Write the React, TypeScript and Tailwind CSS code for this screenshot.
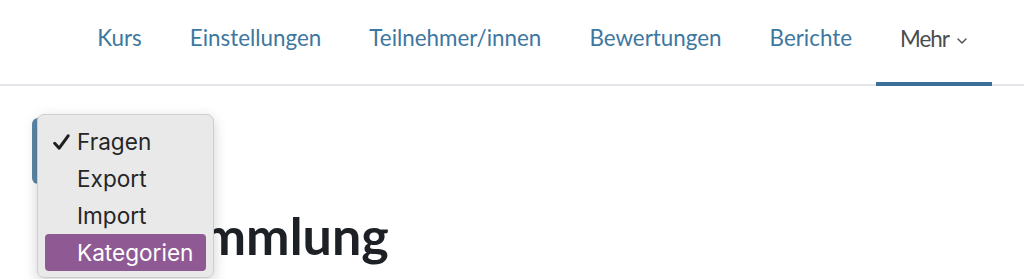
const navLinks = ["Kurs", "Einstellungen", "Teilnehmer/innen", "Bewertungen", "Berichte"];
const menuItems = ["Fragen", "Export", "Import", "Kategorien"];

export default function App() {
  return (
    <div className="relative w-[1024px] h-[279px] overflow-hidden bg-white" style={{ fontFamily: "Lato, 'Noto Sans', sans-serif" }}>
      {/* Secondary navigation */}
      <nav className="flex justify-end pr-[32px] border-b-2 border-[#e3e5e8] h-[86px]">
        {navLinks.map((label) => (
          <a key={label} href="#" className="flex items-center px-[24px] pb-[8px] text-[22.4px] text-[#3e77a0]">
            {label}
          </a>
        ))}
        <a href="#" className="flex items-center gap-[8px] pl-[24px] pr-[25px] pb-[4px] text-[22.4px] tracking-[-1px] text-[#4a4c4f] border-b-4 border-[#3c6f98] -mb-[2px]">
          Mehr
          <svg viewBox="0 0 10 6" className="w-[10px] h-[6px] mt-[4px]" fill="none" stroke="#4a4c4f" strokeWidth={1.4} strokeLinecap="round" strokeLinejoin="round">
            <path d="M1 1 L5 5 L9 1" />
          </svg>
        </a>
      </nav>

      {/* Page content */}
      <div className="pl-[32px] pt-[32px]">
        <div className="w-[20px] h-[66px] rounded-[6px] bg-[#5c87a8]" />
        <h2 className="mt-[25px] pl-[116px] text-[52px] font-bold leading-none text-[#1d2125]">Sammlung</h2>
      </div>

      {/* Open dropdown */}
      <div
        className="absolute left-[37px] top-[114px] w-[177px] px-[7px] pt-[8px] pb-[6px] rounded-[7px] border border-[#cdcdcd] bg-[#e9e9e9] shadow-[0_4px_14px_rgba(0,0,0,0.18)]"
        style={{ fontFamily: "Inter, 'Liberation Sans', sans-serif" }}
      >
        {menuItems.map((item, i) => (
          <div
            key={item}
            className={`relative flex items-center h-[37px] pl-[32px] rounded-[4px] text-[22.6px] ${
              i === 3 ? "bg-[#8f5a93] text-white" : "text-[#262626]"
            }`}
          >
            {i === 0 && (
              <svg viewBox="0 0 20 20" className="absolute left-[7px] top-[10px] w-[19px] h-[19px]" fill="none" stroke="#1f1f1f" strokeWidth={3.2} strokeLinecap="round" strokeLinejoin="round">
                <path d="M2.8 10.8 L7.6 16 L17 3" />
              </svg>
            )}
            {item}
          </div>
        ))}
      </div>
    </div>
  );
}
